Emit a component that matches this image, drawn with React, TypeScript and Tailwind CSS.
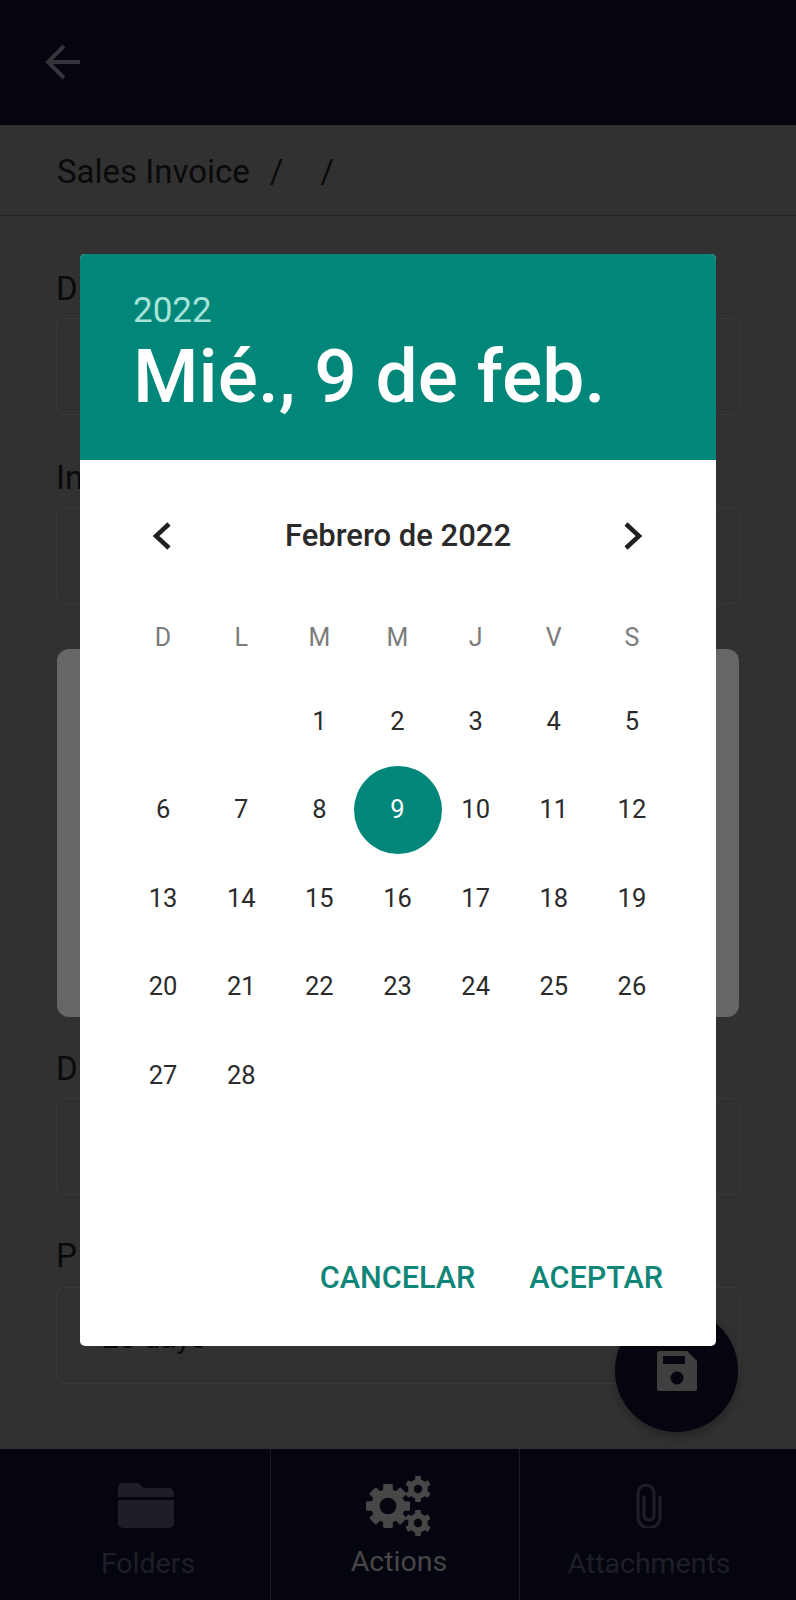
import React from "react";

const font = { fontFamily: "Roboto, 'Liberation Sans', sans-serif" };

function Field({ label, value, gap }: { label: string; value?: string; gap: string }) {
  return (
    <div className="flex flex-col">
      <div className={`${gap} h-[40px] text-[33px] leading-[40px] text-[#0a0a0a] whitespace-nowrap`}>{label}</div>
      <div className="h-[97px] rounded-[8px] border border-[#3a3a3a] bg-[#313131] pl-[28px] pt-[4px] flex items-center text-[30px] text-[#0a0a0a]">
        {value}
      </div>
    </div>
  );
}

function Gear({ x, y, r, teeth, hole }: { x: number; y: number; r: number; teeth: number; hole: number }) {
  const ts = Array.from({ length: teeth }, (_, i) => (i * 360) / teeth);
  return (
    <g transform={`translate(${x} ${y})`}>
      {ts.map((a) => (
        <rect key={a} x={-r * 0.22} y={-r} width={r * 0.44} height={r * 0.5} rx={r * 0.06} transform={`rotate(${a})`} fill="#474747" />
      ))}
      <circle r={r * 0.76} fill="#474747" />
      <circle r={r * hole} fill="#04050f" />
    </g>
  );
}

const weeks: (number | null)[][] = [
  [null, null, 1, 2, 3, 4, 5],
  [6, 7, 8, 9, 10, 11, 12],
  [13, 14, 15, 16, 17, 18, 19],
  [20, 21, 22, 23, 24, 25, 26],
  [27, 28, null, null, null, null, null],
];

export default function App() {
  return (
    <div style={font} className="relative w-[796px] h-[1600px] overflow-hidden bg-[#313131] flex flex-col">
      <header className="h-[125px] shrink-0 bg-[#04050f] flex items-center pl-[45px] pb-[2px]">
        <svg width="36" height="36" viewBox="0 0 36 36" fill="none" stroke="#33353b" strokeWidth="4">
          <path d="M35 18H3M19 2L3 18l16 16" />
        </svg>
      </header>

      <div className="h-[91px] shrink-0 border-b border-[#242424] flex items-center pl-[57px] pt-[3px] text-[33px] text-[#0a0a0a]">
        <span>Sales Invoice</span>
        <span className="ml-[20px]">/</span>
        <span className="ml-[37px]">/</span>
      </div>

      <main className="flex-1 flex flex-col px-[56px] pt-[53px]">
        <Field label="D" gap="mb-[9px]" />
        <div className="h-[43px]" />
        <Field label="In" gap="mb-[9px]" />
        <div className="mt-[45px] mx-px h-[368px] rounded-[12px] bg-[#666666]" />
        <div className="h-[32px]" />
        <Field label="D" gap="mb-[9px]" />
        <div className="h-[41px]" />
        <Field label="P" value="+20 days" gap="mb-[11px]" />
      </main>

      <nav className="h-[151px] shrink-0 bg-[#04050f] flex">
        <div className="w-[270px] pl-[26px] pt-[34px] flex flex-col items-center">
          <svg width="56" height="45" viewBox="0 0 56 45" fill="#1e1f26" className="-ml-[4px]">
            <path d="M0 5a5 5 0 0 1 5-5h15l6 5h25a5 5 0 0 1 5 5v4H0z" />
            <path d="M0 17h56v23a5 5 0 0 1-5 5H5a5 5 0 0 1-5-5z" />
          </svg>
          <div className="mt-[20px] text-[28.5px] leading-[32px] text-[#1e1f26]">Folders</div>
        </div>
        <div className="w-px bg-[#1c1d24]" />
        <div className="w-[248px] pl-[8px] pt-[27px] flex flex-col items-center">
          <svg width="67" height="60" viewBox="0 0 67 60">
            <Gear x={22} y={30} r={22} teeth={8} hole={0.38} />
            <Gear x={52} y={13} r={13} teeth={6} hole={0.32} />
            <Gear x={52} y={47} r={13} teeth={6} hole={0.32} />
          </svg>
          <div className="mt-[10px] text-[28.5px] leading-[32px] text-[#474747]">Actions</div>
        </div>
        <div className="w-px bg-[#1c1d24]" />
        <div className="flex-1 pr-[18px] pt-[34px] flex flex-col items-center">
          <svg width="26" height="45" viewBox="0 0 26 45" fill="none" stroke="#1e1f26" strokeWidth="3.2" strokeLinecap="round">
            <path d="M24 14v20a11 11 0 0 1-22 0V10a8 8 0 0 1 16 0v22a5 5 0 0 1-10 0V14" />
          </svg>
          <div className="mt-[20px] text-[28.5px] leading-[32px] text-[#1e1f26]">Attachments</div>
        </div>
      </nav>

      {/* FAB */}
      <div className="absolute left-[615px] top-[1309px] w-[123px] h-[123px] rounded-full bg-[#04050f] shadow-[0_4px_10px_rgba(0,0,0,0.3)] flex items-center justify-center">
        <svg width="40" height="40" viewBox="0 0 40 40" fill="#3f3f3f">
          <path d="M0 2a2 2 0 0 1 2-2h28l10 10v28a2 2 0 0 1-2 2H2a2 2 0 0 1-2-2z" />
          <rect x="6" y="5" width="22" height="8" fill="#04050f" />
          <circle cx="20" cy="27" r="6.5" fill="#04050f" />
        </svg>
      </div>

      {/* Dialog */}
      <div className="absolute left-[80px] top-[254px] w-[636px] h-[1092px] rounded-[5px] overflow-hidden bg-white flex flex-col">
        <div className="h-[206px] shrink-0 bg-[#00877a] pl-[53px] pt-[36px]">
          <div className="text-[35px] leading-[42px] text-[#a8e3d9]">2022</div>
          <div className="mt-[4px] text-[75px] leading-[80px] font-medium text-white whitespace-nowrap">Mié., 9 de feb.</div>
        </div>

        <div className="flex-1 flex flex-col">
          <div className="mt-[51px] h-[50px] px-[43px] flex items-center justify-between">
            <svg width="78" height="50" viewBox="0 0 78 50" fill="none" stroke="#212121" strokeWidth="4.5">
              <path d="M46 13L33 25l13 12" />
            </svg>
            <div className="text-[31px] font-medium text-[#2a2a2a]">Febrero de 2022</div>
            <svg width="78" height="50" viewBox="0 0 78 50" fill="none" stroke="#212121" strokeWidth="4.5">
              <path d="M31 13l13 12-13 12" />
            </svg>
          </div>

          <div className="mt-[52px] pl-[44px] pr-[45px] grid grid-cols-7 h-[50px] items-center text-center text-[25px] text-[#7c7c7c]">
            {["D", "L", "M", "M", "J", "V", "S"].map((d, i) => (
              <div key={i}>{d}</div>
            ))}
          </div>

          <div className="mt-[14px] pl-[44px] pr-[45px] flex flex-col">
            {weeks.map((w, i) => (
              <div key={i} className="grid grid-cols-7 h-[88.4px]">
                {w.map((d, j) => (
                  <div key={j} className="flex items-center justify-center text-[25.5px] text-[#2b2b2b]">
                    {d === 9 ? (
                      <div className="w-[88px] h-[88px] shrink-0 rounded-full bg-[#00877a] text-white flex items-center justify-center">
                        9
                      </div>
                    ) : (
                      d
                    )}
                  </div>
                ))}
              </div>
            ))}
          </div>

          <div className="mt-auto mb-[48px] pr-[53px] flex justify-end gap-[54px] text-[30.6px] leading-[40px] font-medium text-[#0f8678]">
            <span>CANCELAR</span>
            <span>ACEPTAR</span>
          </div>
        </div>
      </div>
    </div>
  );
}
